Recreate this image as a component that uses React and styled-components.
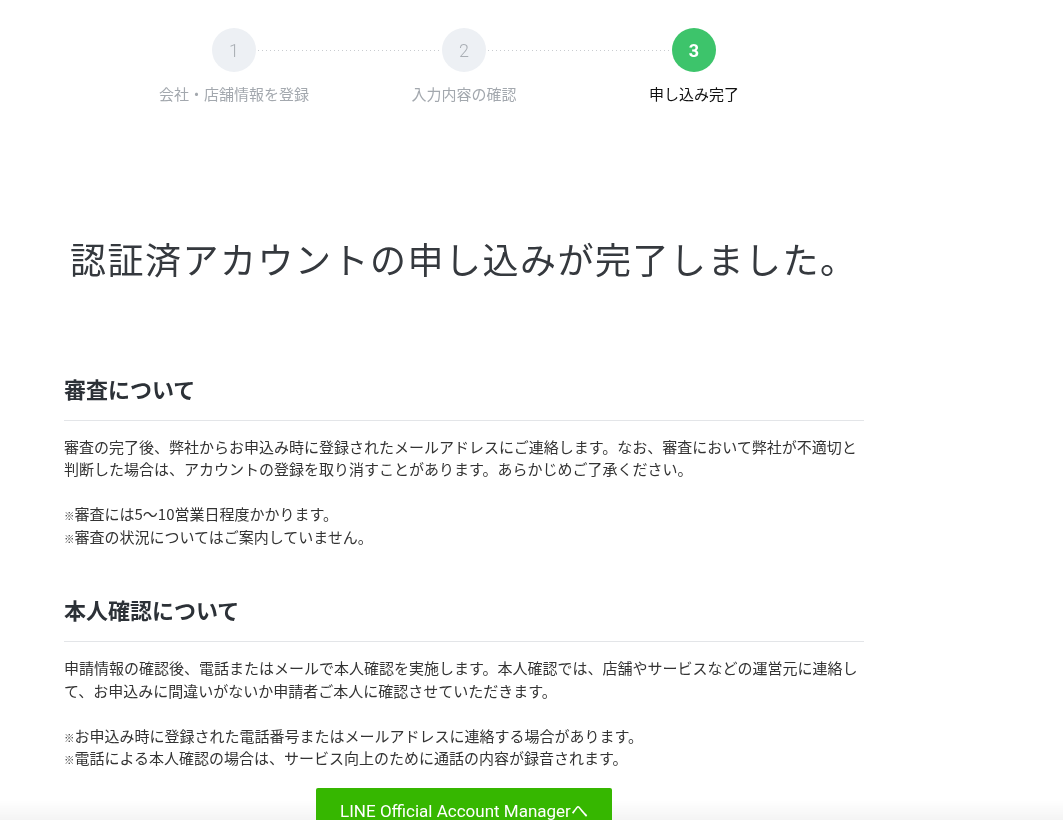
import styled, { createGlobalStyle } from 'styled-components'

/**
 * 認証済アカウント申し込み完了ページ.
 */

const GlobalStyle = createGlobalStyle`
  body {
    margin: 0;
    background: #fff;
    font-family: "Noto Sans CJK JP", "Noto Sans", sans-serif;
    color: #333;
  }
`

const Page = styled.div`
  position: relative;
  z-index: 1;
  width: 800px;
  padding: 28px 0 40px 64px;
`

const Stepper = styled.ol`
  display: flex;
  justify-content: center;
  margin: 0;
  padding: 0;
  list-style: none;
`

const Step = styled.li`
  position: relative;
  width: 230px;
  display: flex;
  flex-direction: column;
  align-items: center;

  &:not(:last-child)::after {
    content: '';
    position: absolute;
    top: 22px;
    left: calc(50% + 24px);
    width: 182px;
    height: 1px;
    background-image: linear-gradient(to right, #c9ccd0 1px, transparent 1px);
    background-size: 4px 1px;
  }
`

const Circle = styled.div`
  width: 44px;
  height: 44px;
  border-radius: 50%;
  display: flex;
  align-items: center;
  justify-content: center;
  background: ${p => (p.$active ? '#3dc46b' : '#edf0f4')};
  color: ${p => (p.$active ? '#fff' : '#a9aeb4')};
  font-family: Roboto, "Liberation Sans", sans-serif;
  font-size: 18px;
  font-weight: ${p => (p.$active ? 700 : 300)};
`

const StepLabel = styled.div`
  margin-top: 11px;
  font-size: 15px;
  line-height: 22.5px;
  color: ${p => (p.$active ? '#111' : '#a3a8ae')};
  white-space: nowrap;
`

const Title = styled.h1`
  margin: 125px 0 0;
  padding-left: 6px;
  font-size: 36px;
  line-height: 54px;
  letter-spacing: 1.5px;
  font-weight: 400;
  color: #35393e;
`

const Section = styled.section`
  margin-top: ${p => p.$gap}px;
`

const Heading = styled.h2`
  margin: 0;
  padding-bottom: 15px;
  border-bottom: 1px solid #e3e5e8;
  font-size: 22px;
  line-height: 33px;
  font-weight: 700;
  color: #2c3137;
`

const Body = styled.p`
  margin: ${p => p.$top}px 0 0;
  font-size: 15px;
  line-height: 22.5px;
  color: #333;
`

const Note = styled.span`
  font-size: 10.5px;
  line-height: 1;
`

const ButtonRow = styled.div`
  display: flex;
  justify-content: center;
  margin-top: 18px;
`

const ManagerButton = styled.a`
  display: flex;
  align-items: center;
  justify-content: center;
  width: 296px;
  height: 44px;
  border-radius: 2px;
  background: #36b700;
  color: #fff;
  font-family: Roboto, "Noto Sans CJK JP", sans-serif;
  font-size: 17px;
  text-decoration: none;
`

const BottomShade = styled.div`
  position: fixed;
  left: 0;
  right: 0;
  bottom: 0;
  height: 20px;
  z-index: 0;
  background: linear-gradient(to bottom, rgba(0, 0, 0, 0), rgba(0, 0, 0, 0.045));
  pointer-events: none;
`

const steps = ['会社・店舗情報を登録', '入力内容の確認', '申し込み完了']

const App = () => {
  return <>
    <GlobalStyle />
    <Page>
      <Stepper>
        {steps.map((label, i) => {
          const active = i === steps.length - 1
          return (
            <Step key={label}>
              <Circle $active={active}>{i + 1}</Circle>
              <StepLabel $active={active}>{label}</StepLabel>
            </Step>
          )
        })}
      </Stepper>

      <Title>認証済アカウントの申し込みが完了しました。</Title>

      <Section $gap={87}>
        <Heading>審査について</Heading>
        <Body $top={15}>
          審査の完了後、弊社からお申込み時に登録されたメールアドレスにご連絡します。なお、審査において弊社が不適切と判断した場合は、アカウントの登録を取り消すことがあります。あらかじめご了承ください。
        </Body>
        <Body $top={22.5}>
          <Note>※</Note>審査には5〜10営業日程度かかります。<br />
          <Note>※</Note>審査の状況についてはご案内していません。
        </Body>
      </Section>

      <Section $gap={45}>
        <Heading>本人確認について</Heading>
        <Body $top={15}>
          申請情報の確認後、電話またはメールで本人確認を実施します。本人確認では、店舗やサービスなどの運営元に連絡して、お申込みに間違いがないか申請者ご本人に確認させていただきます。
        </Body>
        <Body $top={22.5}>
          <Note>※</Note>お申込み時に登録された電話番号またはメールアドレスに連絡する場合があります。<br />
          <Note>※</Note>電話による本人確認の場合は、サービス向上のために通話の内容が録音されます。
        </Body>
      </Section>

      <ButtonRow>
        <ManagerButton href="#">LINE Official Account Managerへ</ManagerButton>
      </ButtonRow>
    </Page>
    <BottomShade />
  </>
}

export default App
